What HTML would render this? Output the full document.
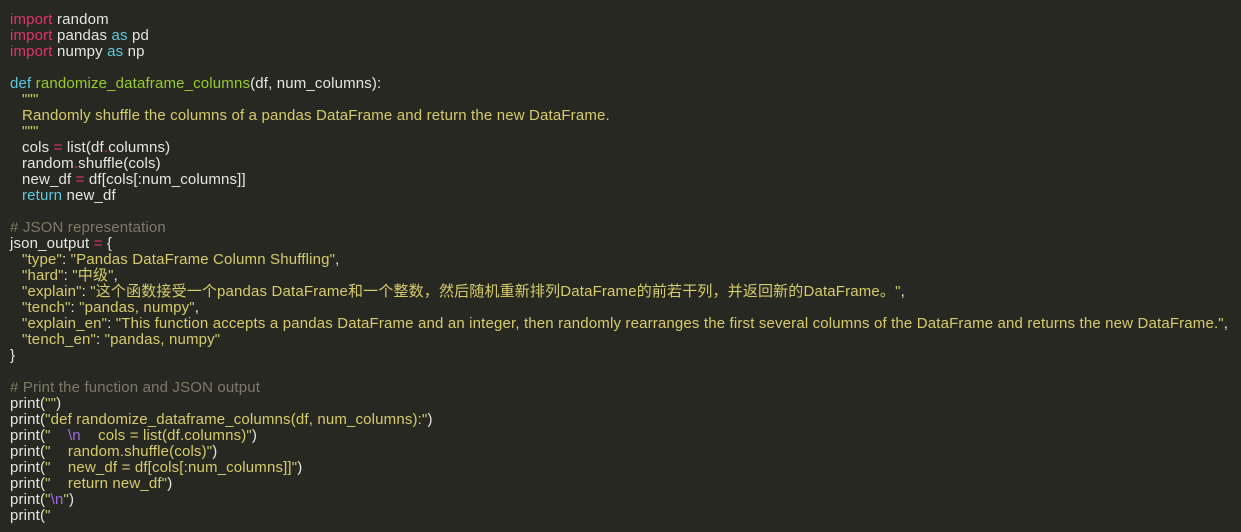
<!DOCTYPE html>
<html><head><meta charset="utf-8"><style>
html,body{margin:0;padding:0;background:#272822;width:1241px;height:532px;overflow:hidden}
#c{position:absolute;left:10px;top:12px;font-family:"Liberation Sans","Noto Sans CJK SC",sans-serif;font-size:15px;line-height:16px;color:#e6e6e2;white-space:pre;letter-spacing:0.16px}
.k{color:#e0326f}.b{color:#5fc9df}.g{color:#98cc2c}.s{color:#d6cc6c}.c{color:#7e7a68}.p{color:#9a6fe0}
.i{padding-left:12px}
</style></head><body><div id="c"><div><span class="k">import</span> random</div><div><span class="k">import</span> pandas <span class="b">as</span> pd</div><div><span class="k">import</span> numpy <span class="b">as</span> np</div><div> </div><div><span class="b">def</span> <span class="g">randomize_dataframe_columns</span>(df, num_columns):</div><div class="i s">"""</div><div class="i s">Randomly shuffle the columns of a pandas DataFrame and return the new DataFrame.</div><div class="i s">"""</div><div class="i">cols <span class="k">=</span> list(df<span class="k">.</span>columns)</div><div class="i">random<span class="k">.</span>shuffle(cols)</div><div class="i">new_df <span class="k">=</span> df[cols[:num_columns]]</div><div class="i"><span class="b">return</span> new_df</div><div> </div><div class="c"># JSON representation</div><div>json_output <span class="k">=</span> {</div><div class="i"><span class="s">"type"</span>: <span class="s">"Pandas DataFrame Column Shuffling"</span>,</div><div class="i"><span class="s">"hard"</span>: <span class="s">"中级"</span>,</div><div class="i"><span class="s">"explain"</span>: <span class="s">"这个函数接受一个pandas DataFrame和一个整数，然后随机重新排列DataFrame的前若干列，并返回新的DataFrame。"</span>,</div><div class="i"><span class="s">"tench"</span>: <span class="s">"pandas, numpy"</span>,</div><div class="i"><span class="s">"explain_en"</span>: <span class="s">"This function accepts a pandas DataFrame and an integer, then randomly rearranges the first several columns of the DataFrame and returns the new DataFrame."</span>,</div><div class="i"><span class="s">"tench_en"</span>: <span class="s">"pandas, numpy"</span></div><div>}</div><div> </div><div class="c"># Print the function and JSON output</div><div>print(<span class="s">""</span>)</div><div>print(<span class="s">"def randomize_dataframe_columns(df, num_columns):"</span>)</div><div>print(<span class="s">"    <span class="p">\n</span>    cols = list(df.columns)"</span>)</div><div>print(<span class="s">"    random.shuffle(cols)"</span>)</div><div>print(<span class="s">"    new_df = df[cols[:num_columns]]"</span>)</div><div>print(<span class="s">"    return new_df"</span>)</div><div>print(<span class="s">"<span class="p">\n</span>"</span>)</div><div>print(<span class="s">"</span></div></div></body></html>
